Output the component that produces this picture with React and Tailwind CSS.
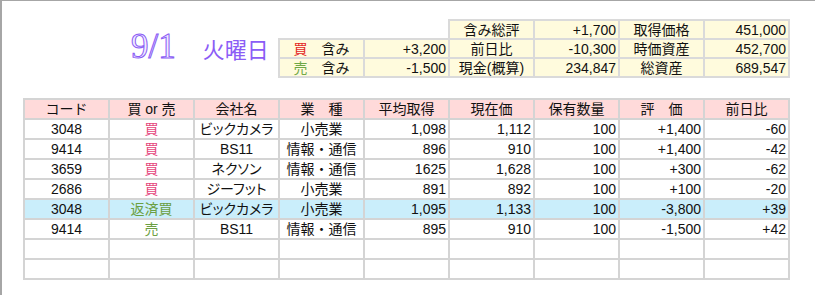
const summaryRows = [
  { lead: null, cells: ["含み総評", "+1,700", "取得価格", "451,000"] },
  { lead: ["買", "text-[#e3261f]", "+3,200"], cells: ["前日比", "-10,300", "時価資産", "452,700"] },
  { lead: ["売", "text-[#6fa846]", "-1,500"], cells: ["現金(概算)", "234,847", "総資産", "689,547"] },
];

const headers = ["コード", "買 or 売", "会社名", "業　種", "平均取得", "現在価", "保有数量", "評　価", "前日比"];

const trades = [
  ["3048", "買", "ビックカメラ", "小売業", "1,098", "1,112", "100", "+1,400", "-60"],
  ["9414", "買", "BS11", "情報・通信", "896", "910", "100", "+1,400", "-42"],
  ["3659", "買", "ネクソン", "情報・通信", "1625", "1,628", "100", "+300", "-62"],
  ["2686", "買", "ジーフット", "小売業", "891", "892", "100", "+100", "-20"],
  ["3048", "返済買", "ビックカメラ", "小売業", "1,095", "1,133", "100", "-3,800", "+39"],
  ["9414", "売", "BS11", "情報・通信", "895", "910", "100", "-1,500", "+42"],
  null,
  null,
];

const sideColor = (s) => (s === "買" ? "text-[#e5467c]" : "text-[#6c9f42]");

export default function App() {
  return (
    <div className="w-[815px] h-[295px] bg-white border-t border-l-2 border-[#a6a6a6] pl-[21px] pt-[18px] text-[#111] font-['Liberation_Sans','Noto_Sans_CJK_JP',sans-serif] overflow-hidden">
      {/* 上段: 日付とサマリー */}
      <div className="flex">
        <div className="w-[255px] pl-[108px] pt-[10px] flex items-baseline text-[#8b5cf6]">
          <span className="font-['Liberation_Serif',serif] text-[35px] leading-none text-[#f1ebff] [-webkit-text-stroke:1px_#8a5cf5]">9/1</span>
          <span className="ml-[27px] text-[22px] leading-none font-['Noto_Sans_CJK_JP',sans-serif]">火曜日</span>
        </div>
        <table className="border-collapse table-fixed text-[14px] leading-none whitespace-nowrap">
          <colgroup>
            {[0, 1, 2, 3, 4, 5].map((i) => (
              <col key={i} className="w-[85px]" />
            ))}
          </colgroup>
          <tbody>
            {summaryRows.map((r, i) => (
              <tr key={i} className="h-[19px]">
                {r.lead ? (
                  <>
                    <td className="border-2 border-[#dadada] bg-[#fffbdd] text-center p-0">
                      <span className={r.lead[1]}>{r.lead[0]}</span>
                      <span>　含み</span>
                    </td>
                    <td className="border-2 border-[#dadada] bg-[#fffbdd] text-right p-0 pr-[2px]">{r.lead[2]}</td>
                  </>
                ) : (
                  <>
                    <td className="p-0" />
                    <td className="p-0" />
                  </>
                )}
                {r.cells.map((c, j) => (
                  <td
                    key={j}
                    className={`border-2 border-[#dadada] bg-[#fffbdd] p-0 ${j % 2 === 0 ? "text-center" : "text-right pr-[2px]"}`}
                  >
                    {c}
                  </td>
                ))}
              </tr>
            ))}
          </tbody>
        </table>
      </div>

      {/* 取引一覧 */}
      <table className="mt-[20px] border-collapse table-fixed text-[14px] leading-none whitespace-nowrap">
        <colgroup>
          {headers.map((h) => (
            <col key={h} className="w-[85px]" />
          ))}
        </colgroup>
        <thead>
          <tr className="h-[20px] bg-[#ffdada]">
            {headers.map((h) => (
              <th key={h} className="border-2 border-[#d4d4d4] font-normal text-center p-0">
                {h}
              </th>
            ))}
          </tr>
        </thead>
        <tbody>
          {trades.map((r, i) => (
            <tr key={i} className={`h-[20px] ${r && r[1] === "返済買" ? "bg-[#caeefb]" : "bg-white"}`}>
              {r
                ? r.map((c, j) => (
                    <td
                      key={j}
                      className={`border-2 border-[#d4d4d4] p-0 ${j < 4 ? "text-center" : "text-right pr-[2px]"} ${j === 1 ? sideColor(c) : ""} ${j === 2 ? "[font-feature-settings:'palt']" : ""}`}
                    >
                      {c}
                    </td>
                  ))
                : headers.map((h) => <td key={h} className="border-2 border-[#d4d4d4] p-0" />)}
            </tr>
          ))}
        </tbody>
      </table>
    </div>
  );
}
